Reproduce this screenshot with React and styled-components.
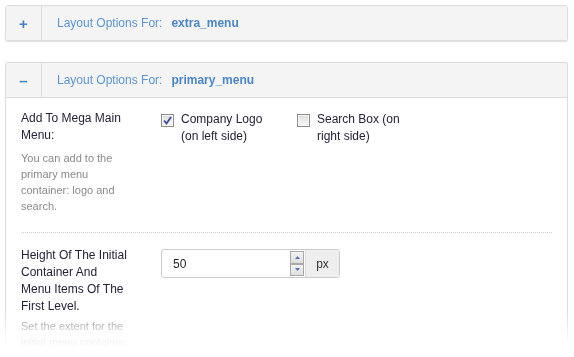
import React, { useState } from "react"
import styled, { createGlobalStyle } from "styled-components"

const Global = createGlobalStyle`
  body {
    margin: 0;
    background: #fff;
    font-family: "Liberation Sans", Arial, sans-serif;
  }
`

const Page = styled.div`
  padding: 5px 6px 0 5px;
  display: flex;
  flex-direction: column;
  gap: 21px;
  height: 357px;
  overflow: hidden;
  box-sizing: border-box;
  -webkit-mask-image: linear-gradient(to bottom, #000 312px, rgba(0,0,0,0.15) 340px, transparent 350px);
  mask-image: linear-gradient(to bottom, #000 312px, rgba(0,0,0,0.15) 340px, transparent 350px);
`

const Panel = styled.section`
  border: 1px solid #dcdcdc;
  border-radius: 3px;
  background: #fff;
  box-shadow: ${p => (p.open ? "none" : "0 1px 1px rgba(0,0,0,0.12)")};
  ${p => p.open && "border-bottom: none; border-radius: 3px 3px 0 0;"}
`

const Header = styled.div`
  display: flex;
  height: 34px;
  background: #f4f4f4;
  border-radius: 3px 3px 0 0;
  ${p => p.open && "border-bottom: 1px solid #dcdcdc;"}
`

const Toggle = styled.div`
  width: 35px;
  border-right: 1px solid #dcdcdc;
  display: flex;
  align-items: center;
  justify-content: center;
  color: #3f82c9;
  font-size: 15px;
  font-weight: bold;
`

const Title = styled.div`
  display: flex;
  align-items: center;
  padding-left: 15px;
  font-size: 12px;
  color: #5f95d3;
  b {
    margin-left: 9px;
    color: #4a86c8;
  }
`

const Body = styled.div`
  padding: 12px 15px 0 15px;
`

const Row = styled.div`
  display: flex;
  padding-bottom: ${p => p.pb || 0}px;
  border-bottom: ${p => (p.sep ? "1px dotted #cfcfcf" : "none")};
  margin-bottom: ${p => (p.sep ? 14 : 0)}px;
`

const LabelCol = styled.div`
  width: 140px;
  flex-shrink: 0;
`

const Label = styled.div`
  font-size: 12px;
  line-height: 17px;
  color: #24223a;
  width: 108px;
`

const Desc = styled.div`
  margin-top: ${p => p.mt}px;
  font-size: 11px;
  line-height: 16px;
  color: #8a8a8a;
  width: 118px;
`

const Controls = styled.div`
  display: flex;
  padding-top: 1px;
`

const Option = styled.label`
  display: flex;
  width: 136px;
  font-size: 12px;
  line-height: 17px;
  color: #24223a;
`

const Box = styled.span`
  width: 11px;
  height: 11px;
  margin: 3px 7px 0 0;
  border: 1px solid #8e8f8f;
  background: linear-gradient(#dcdcdc, #fbfbfb);
  box-shadow: inset 0 0 0 1px #f6f6f6;
  display: flex;
  align-items: center;
  justify-content: center;
  flex-shrink: 0;
`

const InputGroup = styled.div`
  display: flex;
  height: 29px;
  margin-top: 2px;
  border: 1px solid #cccccc;
  border-radius: 3px;
  box-sizing: border-box;
  width: 179px;
  overflow: hidden;
`

const Field = styled.div`
  flex: 1;
  display: flex;
  align-items: center;
  padding-left: 11px;
  font-size: 12px;
  color: #222;
`

const Spinner = styled.div`
  width: 14px;
  display: flex;
  flex-direction: column;
  padding: 1px 0;
  margin-right: 1px;
`

const SpinBtn = styled.div`
  flex: 1;
  border: 1px solid #a9a9a9;
  background: linear-gradient(#f4f4f4, #dedede);
  display: flex;
  align-items: center;
  justify-content: center;
`

const Addon = styled.div`
  width: 33px;
  background: #eeeeee;
  border-left: 1px solid #dddddd;
  display: flex;
  align-items: center;
  justify-content: center;
  font-size: 12px;
  color: #333;
`

const Check = () => (
  <svg width="9" height="9" viewBox="0 0 9 9">
    <path d="M1 4.5 L3.5 7.5 L8 1" fill="none" stroke="#3d4f9a" strokeWidth="1.8" />
  </svg>
)

const Arrow = ({ up }) => (
  <svg width="5" height="3" viewBox="0 0 5 3">
    <path d={up ? "M0 3 L2.5 0 L5 3 Z" : "M0 0 L2.5 3 L5 0 Z"} fill="#5a6fb0" />
  </svg>
)

export default function App() {
  const [logo] = useState(true)
  return (
    <>
      <Global />
      <Page>
        <Panel>
          <Header>
            <Toggle>+</Toggle>
            <Title>Layout Options For: <b>extra_menu</b></Title>
          </Header>
        </Panel>
        <Panel open>
          <Header open>
            <Toggle>–</Toggle>
            <Title>Layout Options For: <b>primary_menu</b></Title>
          </Header>
          <Body>
            <Row sep pb={18}>
              <LabelCol>
                <Label>Add To Mega Main Menu:</Label>
                <Desc mt={6}>You can add to the primary menu container: logo and search.</Desc>
              </LabelCol>
              <Controls>
                <Option>
                  <Box>{logo && <Check />}</Box>
                  <span>Company Logo<br />(on left side)</span>
                </Option>
                <Option>
                  <Box />
                  <span>Search Box (on<br />right side)</span>
                </Option>
              </Controls>
            </Row>
            <Row>
              <LabelCol>
                <Label>Height Of The Initial Container And Menu Items Of The First Level.</Label>
                <Desc mt={3}>Set the extent for the initial menu container.</Desc>
              </LabelCol>
              <InputGroup>
                <Field>50</Field>
                <Spinner>
                  <SpinBtn><Arrow up /></SpinBtn>
                  <SpinBtn><Arrow /></SpinBtn>
                </Spinner>
                <Addon>px</Addon>
              </InputGroup>
            </Row>
          </Body>
        </Panel>
      </Page>
    </>
  )
}
